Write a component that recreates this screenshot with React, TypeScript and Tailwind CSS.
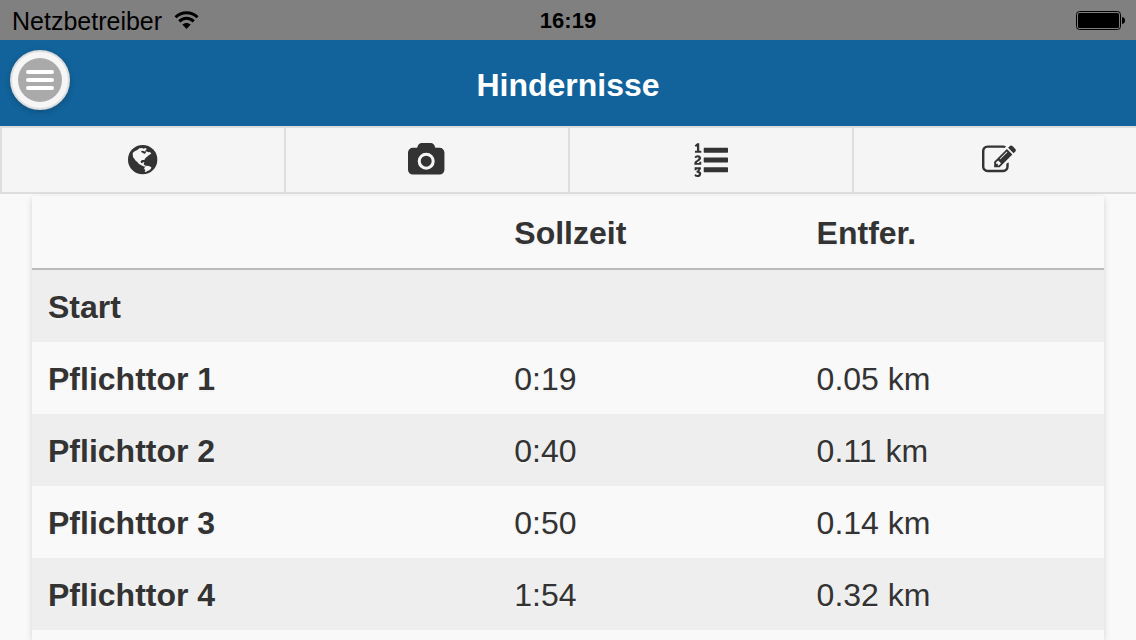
import type { ReactNode } from "react";

interface Obstacle {
	name: string;
	time: string;
	distance: string;
}

const obstacles: Obstacle[] = [
	{ name: "Start", time: "", distance: "" },
	{ name: "Pflichttor 1", time: "0:19", distance: "0.05 km" },
	{ name: "Pflichttor 2", time: "0:40", distance: "0.11 km" },
	{ name: "Pflichttor 3", time: "0:50", distance: "0.14 km" },
	{ name: "Pflichttor 4", time: "1:54", distance: "0.32 km" },
];

function WifiIcon() {
	return (
		<svg viewBox="0 0 25 20" className="h-5 w-[25px]" fill="none" stroke="currentColor" strokeWidth="3">
			<path d="M1.5 6.3C7.8.1 17.2.1 23.500 6.3" />
			<path d="M5.300 10.400C9.400 6.300 15.600 6.300 19.700 10.400" />
			<path d="M12.500 18L8.300 13.600C10.700 11.300 14.300 11.300 16.700 13.600Z" fill="currentColor" stroke="none" />
		</svg>
	);
}

function BatteryIcon() {
	return (
		<svg viewBox="0 0 50 20" className="h-5 w-[50px]" fill="currentColor">
			<rect x="0.500" y="0.500" width="44" height="18" rx="3" fill="none" stroke="currentColor" />
			<rect x="2" y="2" width="41" height="15" rx="1.500" />
			<path d="M46 6C48 6.300 49 7.500 49 9.500S48 12.700 46 13Z" />
		</svg>
	);
}

function GlobeIcon() {
	return (
		<svg viewBox="84 60 90 90" className="size-[30px]">
			<circle cx="128" cy="104" r="44" fill="currentColor" />
			<g fill="#f5f5f5">
				<path d="M98 84L104 79L112 75L118 70L126 69L131 71L136 69L141 72L137 75L136 80L131 78L125 77L123 81L128 83L133 87L137 84L139 79L145 82L150 81L154 86L147 90L143 94L139 97L135 101L133 105L126 105L122 109L123 114L126 115L129 112L133 112L131 118L134 121L138 122L136 125L130 124L124 121L117 117L112 111L107 107L103 101L99 96Z" />
				<path d="M135 125L140 122L147 123L154 127L153 131L148 136L142 138L138 141L134 140L136 135L132 131Z" />
			</g>
		</svg>
	);
}

function CameraIcon() {
	return (
		<svg viewBox="0 0 1920 1792" preserveAspectRatio="xMinYMid" className="h-[34px] w-[38px]" fill="currentColor">
			<path d="M960 672q119 0 203.500 84.500t84.500 203.500-84.500 203.500-203.500 84.500-203.500-84.500-84.500-203.500 84.500-203.500 203.500-84.500zm704-416q106 0 181 75t75 181v896q0 106-75 181t-181 75h-1408q-106 0-181-75t-75-181v-896q0-106 75-181t181-75h224l51-136q19-49 69.500-84.500t103.500-35.500h512q53 0 103.500 35.500t69.500 84.500l51 136h224zm-704 1152q185 0 316.500-131.500t131.500-316.500-131.500-316.500-316.500-131.500-316.500 131.500-131.500 316.500 131.500 316.500 316.500 131.500z" />
		</svg>
	);
}

function ListIcon() {
	return (
		<svg viewBox="0 0 1792 1792" className="size-[34px]" fill="currentColor">
			<path d="M381 1620q0 80-54.500 126t-135.500 46q-106 0-172-66l57-88q49 45 106 45 29 0 50.500-14.500t21.500-42.500q0-64-105-56l-26-56q8-10 32.500-43.500t42.500-54 37-38.500v-1q-16 0-48.500 1t-48.500 1v53h-106v-152h333v88l-95 115q51 12 81 49t30 88zm2-627v159h-362q-6-36-6-54 0-51 23.500-93t56.500-68 66-47.500 56.500-43.500 23.500-45q0-25-14.500-38.500t-39.500-13.500q-46 0-81 58l-85-59q24-51 71.500-79.500t105.500-28.500q73 0 123 41.500t50 112.500q0 50-34 91.500t-75 64.500-75.500 50.500-35.500 52.500h127v-60h105zm1409 319v192q0 13-9.500 22.500t-22.500 9.500h-1216q-13 0-22.500-9.500t-9.500-22.500v-192q0-14 9-23t23-9h1216q13 0 22.500 9.500t9.500 22.500zm-1408-899v99h-335v-99h107q0-41 .5-122t.5-121v-12h-2q-8 17-50 54l-71-76 136-127h106v404h108zm1408 387v192q0 13-9.500 22.500t-22.500 9.500h-1216q-13 0-22.500-9.500t-9.500-22.500v-192q0-14 9-23t23-9h1216q13 0 22.500 9.500t9.500 22.500zm0-512v192q0 13-9.500 22.500t-22.500 9.500h-1216q-13 0-22.500-9.500t-9.500-22.500v-192q0-13 9.500-22.500t22.500-9.500h1216q13 0 22.500 9.500t9.500 22.500z" />
		</svg>
	);
}

function EditIcon() {
	return (
		<svg viewBox="-422 0 2214 1792" className="h-[34px] w-[42px]" fill="currentColor">
			<path d="M888 1184l116-116-152-152-116 116v56h96v96h56zm440-720q-16-16-33 1l-350 350q-17 17-1 33t33-1l350-350q17-17 1-33zm80 594v190q0 119-84.500 203.500t-203.500 84.500h-832q-119 0-203.500-84.500t-84.500-203.500v-832q0-119 84.500-203.500t203.500-84.500h832q63 0 117 25 15 7 18 23 3 17-9 29l-49 49q-14 14-32 8-23-6-45-6h-832q-66 0-113 47t-47 113v832q0 66 47 113t113 47h832q66 0 113-47t47-113v-126q0-13 9-22l64-64q15-15 35-7t20 29zm-96-738l288 288-672 672h-288v-288zm444 132l-92 92-288-288 92-92q28-28 68-28t68 28l152 152q28 28 28 68t-28 68z" />
		</svg>
	);
}

const tabs: { id: string; icon: ReactNode }[] = [
	{ id: "globe", icon: <GlobeIcon /> },
	{ id: "camera", icon: <CameraIcon /> },
	{ id: "list", icon: <ListIcon /> },
	{ id: "edit", icon: <EditIcon /> },
];

function StatusBar() {
	return (
		<div className="grid h-10 shrink-0 grid-cols-[1fr_auto_1fr] items-center bg-[#808080] px-[10px] pt-[2px] text-black">
			<div className="flex items-center gap-3 pl-[2px]">
				<span className="text-[25px] leading-9">Netzbetreiber</span>
				<WifiIcon />
			</div>
			<span className="text-[22px] leading-9 font-bold">16:19</span>
			<div className="flex justify-end">
				<BatteryIcon />
			</div>
		</div>
	);
}

function Header() {
	return (
		<header className="flex shrink-0 items-start bg-[#12639b] px-[10px] pt-[10px] pb-4 text-white">
			<button
				type="button"
				className="flex size-15 items-center justify-center rounded-full border-2 border-[#ddd] bg-[#f6f6f6] shadow-[0_2px_6px_rgba(0,0,0,0.2)]"
			>
				<span className="flex size-11 flex-col items-center justify-center gap-1 rounded-full bg-[#aaa]">
					<span className="h-1 w-7 rounded-full bg-white" />
					<span className="h-1 w-7 rounded-full bg-white" />
					<span className="h-1 w-7 rounded-full bg-white" />
				</span>
			</button>
			<h1 className="flex-1 pt-[15px] text-center text-[32px] leading-10 font-bold">Hindernisse</h1>
			<div className="w-15" />
		</header>
	);
}

export default function App() {
	return (
		<div className="flex h-screen flex-col overflow-hidden bg-[#f9f9f9] font-['Liberation_Sans',Arial,sans-serif] text-[#333]">
			<StatusBar />
			<Header />
			<nav className="grid shrink-0 grid-cols-4 border-y-2 border-[#ddd] bg-[#f5f5f5]">
				{tabs.map((tab) => (
					<button
						key={tab.id}
						type="button"
						className="flex h-16 items-center justify-center border-l-2 border-[#ddd]"
					>
						{tab.icon}
					</button>
				))}
			</nav>
			<main className="flex min-h-0 flex-1 flex-col overflow-hidden px-8 pt-[2px]">
				<div className="flex-1 shadow-[0_2px_6px_rgba(0,0,0,0.15)]">
					<table className="w-full table-fixed border-separate border-spacing-0 text-left text-[32px] leading-10 [text-shadow:0_2px_0_#f3f3f3]">
						<thead>
							<tr>
								<td className="w-[43.5%] border-b-2 border-[#bbb] px-4 pt-[17px] pb-[15px]" />
								<th className="w-[28.2%] border-b-2 border-[#bbb] px-4 pt-[17px] pb-[15px]">Sollzeit</th>
								<th className="border-b-2 border-[#bbb] px-4 pt-[17px] pb-[15px]">Entfer.</th>
							</tr>
						</thead>
						<tbody>
							{obstacles.map((obstacle) => (
								<tr key={obstacle.name} className="odd:bg-[#eee]">
									<th className="px-4 pt-[17px] pb-[15px]">{obstacle.name}</th>
									<td className="px-4 pt-[17px] pb-[15px]">{obstacle.time}</td>
									<td className="px-4 pt-[17px] pb-[15px]">{obstacle.distance}</td>
								</tr>
							))}
						</tbody>
					</table>
				</div>
			</main>
		</div>
	);
}
